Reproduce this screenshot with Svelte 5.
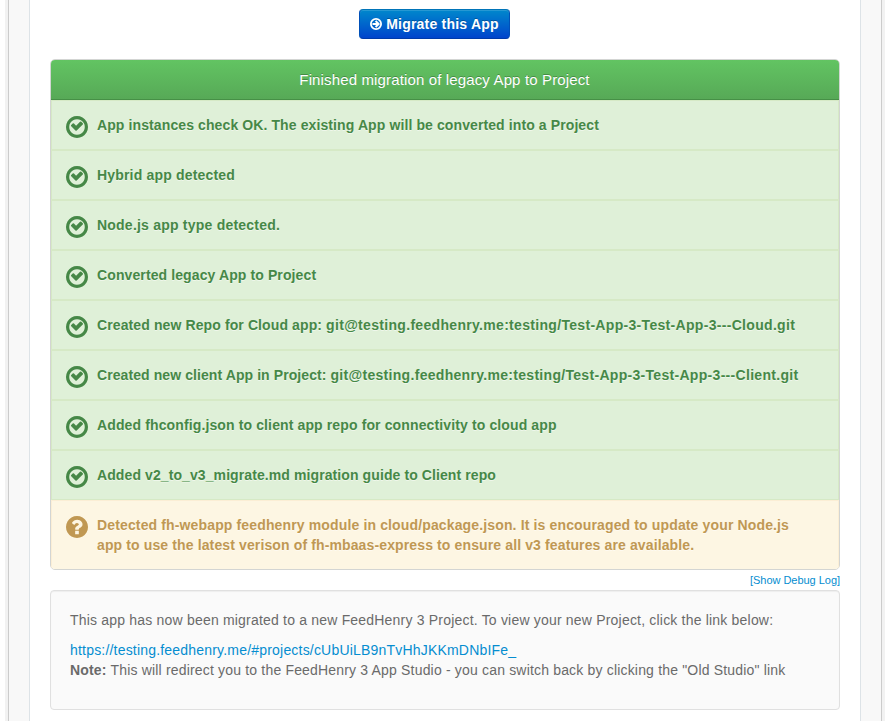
<script>
  const steps = [
    [{ text: 'App instances check OK. The existing App will be converted into a Project', tracking: 0.105 }],
    [{ text: 'Hybrid app detected', tracking: 0.18 }],
    [{ text: 'Node.js app type detected.', tracking: 0.22 }],
    [{ text: 'Converted legacy App to Project', tracking: 0.11 }],
    [
      { text: 'Created new Repo for Cloud app: ', tracking: 0.11 },
      { text: 'git@testing.feedhenry.me:testing/Test-App-3-Test-App-3---Cloud.git', tracking: 0.313 }
    ],
    [
      { text: 'Created new client App in Project: ', tracking: 0.085 },
      { text: 'git@testing.feedhenry.me:testing/Test-App-3-Test-App-3---Client.git', tracking: 0.303 }
    ],
    [{ text: 'Added fhconfig.json to client app repo for connectivity to cloud app', tracking: 0.125 }],
    [{ text: 'Added v2_to_v3_migrate.md migration guide to Client repo', tracking: 0.095 }]
  ];
  const warning = [
    { text: 'Detected fh-webapp feedhenry module in cloud/package.json. It is encouraged to update your Node.js', tracking: 0.14 },
    { text: 'app to use the latest verison of fh-mbaas-express to ensure all v3 features are available.', tracking: 0.126 }
  ];
  const disc = 'M1536 896q0 209-103 385.5t-279.5 279.5-385.5 103-385.5-103-279.5-279.5-103-385.5 103-385.5 279.5-279.5 385.5-103 385.5 103 279.5 279.5 103 385.5z';
  const check = 'M1171 723l-422 422q-19 19-45 19t-45-19l-294-294q-19-19-19-45t19-45l102-102q19-19 45-19t45 19l147 147 275-275q19-19 45-19t45 19l102 102q19 19 19 45t-19 45zM1312 896q0-148-73-273t-198-198-273-73-273 73-198 198-73 273 73 273 198 198 273 73 273-73 198-198 73-273z';
  const question = 'M896 1376v-192q0-14-9-23t-23-9h-192q-14 0-23 9t-9 23v192q0 14 9 23t23 9h192q14 0 23-9t9-23zM1152 704q0-88-55.5-163t-138.5-116-170-41q-243 0-371 213-15 24 8 42l132 100q7 6 19 6 16 0 25-12 53-68 86-92 34-24 86-24 48 0 85.5 26t37.5 59q0 38-20 61t-68 45q-63 28-115.5 86.5t-52.5 125.5v36q0 14 9 23t23 9h192q14 0 23-9t9-23q0-19 21.5-49.5t54.5-49.5q32-18 49-28.5t46-35 44.5-48 28-60.5 12.5-81z';
</script>

<div class="page">
  <div class="frame">
    <main>
      <button>
        <svg viewBox="0 0 12 12" width="12" height="12"><circle cx="6" cy="6" r="5.1" fill="none" stroke="currentColor" stroke-width="1.8" /><path d="M2.5 6h5.5M5.6 3 8.6 6 5.6 9" fill="none" stroke="currentColor" stroke-width="2" /></svg>
        <span>Migrate this App</span>
      </button>
      <section class="panel">
        <h1>Finished migration of legacy App to Project</h1>
        {#each steps as parts}
          <div class="row ok">
            <svg viewBox="0 128 1536 1536" width="22" height="22"><path fill="currentColor" fill-rule="evenodd" d={disc + check} /></svg>
            <div class="line">{#each parts as part}<span style:letter-spacing="{part.tracking}px">{part.text}</span>{/each}</div>
          </div>
        {/each}
        <div class="row warn">
          <svg viewBox="0 128 1536 1536" width="22" height="22"><path fill="currentColor" fill-rule="evenodd" d={disc + question} /></svg>
          <div>
            {#each warning as line}
              <div style:letter-spacing="{line.tracking}px">{line.text}</div>
            {/each}
          </div>
        </div>
      </section>
      <div class="debug"><a href="#log">[Show Debug Log]</a></div>
      <section class="well">
        <p>This app has now been migrated to a new FeedHenry 3 Project. To view your new Project, click the link below:</p>
        <a href="#project">https://testing.feedhenry.me/#projects/cUbUiLB9nTvHhJKKmDNbIFe_</a>
        <div class="note"><b>Note:</b> This will redirect you to the FeedHenry 3 App Studio - you can switch back by clicking the "Old Studio" link</div>
      </section>
    </main>
  </div>
</div>

<style>
  :global(body) { background: #fff; overflow: hidden; }
  * { box-sizing: border-box; }
  .page { width: 880px; height: 721px; margin-left: 5px; padding: 0 3px; background: #f2f2f2; font: 14px/20px "Liberation Sans", Arial, sans-serif; color: #6a6a6a; }
  .frame { height: 721px; border: solid #ccc; border-width: 0 1px; background: #f8f8f8; padding: 0 20px; }
  main { height: 721px; background: #fff; border: solid #dde3e7; border-width: 0 1px; padding: 9px 20px 0; display: flex; flex-direction: column; }
  button { align-self: center; width: 151px; height: 30px; flex: none; margin-right: 21px; display: flex; align-items: center; justify-content: center; gap: 4px; padding: 0; font: bold 14px/20px "Liberation Sans", Arial, sans-serif; letter-spacing: .22px; color: #fff; text-shadow: 0 -1px 0 rgba(0,0,0,.25); border: 1px solid; border-color: #0074b8 #0050b8 #003aa8; border-radius: 4px; background: linear-gradient(#0088cc, #0044cc); box-shadow: inset 0 1px 0 rgba(255,255,255,.15); white-space: nowrap; }
  .panel { margin-top: 20px; flex: none; height: 511px; border: 1px solid #d3d5d3; border-radius: 5px; overflow: hidden; }
  h1 { margin: 0; height: 40px; padding-right: 1px; font-weight: 400; font-size: 15px; line-height: 40px; letter-spacing: .14px; text-align: center; color: #fff; text-shadow: 0 -1px 0 rgba(0,0,0,.25); background: linear-gradient(#62c462, #57a957); border-bottom: 1px solid #469046; }
  .row { height: 50px; display: flex; gap: 9px; padding: 14px 0 0 14px; border: 1px solid #d6e9c6; font-weight: 700; white-space: nowrap; text-shadow: 0 1px 0 rgba(255,255,255,.5); }
  .row svg { margin-top: 1px; flex: none; }
  .line { white-space: pre; }
  .ok { background: #dff0d8; color: #468847; }
  .warn { height: 70px; background: #fdf6e3; border-color: #fbeed5; color: #c09853; }
  .debug { height: 20px; flex: none; text-align: right; font-size: 11px; line-height: 20px; letter-spacing: -.03px; }
  a { color: #058dd0; text-decoration: none; }
  .well { height: 120px; flex: none; border: 1px solid #e0e0e0; border-radius: 4px; background: #fafafa; box-shadow: inset 0 1px 1px rgba(0,0,0,.05); padding: 19px; white-space: nowrap; letter-spacing: .195px; }
  .note { letter-spacing: .177px; }
  p { margin: 0 0 10px; }
</style>
